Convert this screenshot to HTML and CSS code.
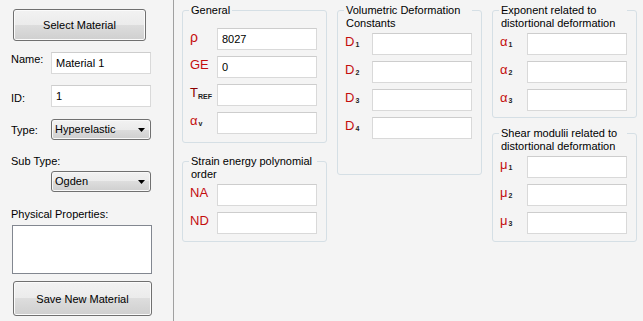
FILE: index.html
```html
<!DOCTYPE html>
<html>
<head>
<meta charset="utf-8">
<link rel="stylesheet" href="styles.css">
</head>
<body>
<div class="app">
  <aside class="side">
    <button class="btn btn-select">Select Material</button>
    <div class="frow row-name"><span class="flabel">Name:</span><input class="tb" type="text" value="Material 1" readonly></div>
    <div class="frow row-id"><span class="flabel">ID:</span><input class="tb" type="text" value="1" readonly></div>
    <div class="frow row-type"><span class="flabel">Type:</span>
      <div class="combo"><span>Hyperelastic</span><svg class="tri" width="7" height="4" viewBox="0 0 7 4"><polygon points="0,0 7,0 3.5,4" fill="#000"/></svg></div>
    </div>
    <div class="sub-label">Sub Type:</div>
    <div class="combo combo-sub"><span>Ogden</span><svg class="tri" width="7" height="4" viewBox="0 0 7 4"><polygon points="0,0 7,0 3.5,4" fill="#000"/></svg></div>
    <div class="phys-label">Physical Properties:</div>
    <textarea class="phys" readonly></textarea>
    <button class="btn btn-save">Save New Material</button>
  </aside>
  <main class="main">
    <div class="col">
      <section class="group g-general">
        <div class="gtitle one">General</div>
        <div class="rows">
          <div class="prow"><span class="sym rho">ρ</span><input class="tb" type="text" value="8027" readonly></div>
          <div class="prow"><span class="sym">GE</span><input class="tb" type="text" value="0" readonly></div>
          <div class="prow"><span class="sym"><span class="dark">T</span><span class="sub ref">REF</span></span><input class="tb" type="text" value="" readonly></div>
          <div class="prow"><span class="sym">α<span class="sub">v</span></span><input class="tb" type="text" value="" readonly></div>
        </div>
      </section>
      <section class="group g-strain">
        <div class="gtitle two">Strain energy polynomial<br>order</div>
        <div class="rows">
          <div class="prow"><span class="sym">NA</span><input class="tb" type="text" value="" readonly></div>
          <div class="prow"><span class="sym">ND</span><input class="tb" type="text" value="" readonly></div>
        </div>
      </section>
    </div>
    <div class="col">
      <section class="group g-vol">
        <div class="gtitle two">Volumetric Deformation<br>Constants</div>
        <div class="rows">
          <div class="prow"><span class="sym">D<span class="sub">1</span></span><input class="tb" type="text" value="" readonly></div>
          <div class="prow"><span class="sym">D<span class="sub">2</span></span><input class="tb" type="text" value="" readonly></div>
          <div class="prow"><span class="sym">D<span class="sub">3</span></span><input class="tb" type="text" value="" readonly></div>
          <div class="prow"><span class="sym">D<span class="sub">4</span></span><input class="tb" type="text" value="" readonly></div>
        </div>
      </section>
    </div>
    <div class="col">
      <section class="group g-exp">
        <div class="gtitle two">Exponent related to<br>distortional deformation</div>
        <div class="rows">
          <div class="prow"><span class="sym">α<span class="sub">1</span></span><input class="tb" type="text" value="" readonly></div>
          <div class="prow"><span class="sym">α<span class="sub">2</span></span><input class="tb" type="text" value="" readonly></div>
          <div class="prow"><span class="sym">α<span class="sub">3</span></span><input class="tb" type="text" value="" readonly></div>
        </div>
      </section>
      <section class="group g-shear">
        <div class="gtitle two">Shear modulii related to<br>distortional deformation</div>
        <div class="rows">
          <div class="prow"><span class="sym">μ<span class="sub">1</span></span><input class="tb" type="text" value="" readonly></div>
          <div class="prow"><span class="sym">μ<span class="sub">2</span></span><input class="tb" type="text" value="" readonly></div>
          <div class="prow"><span class="sym">μ<span class="sub">3</span></span><input class="tb" type="text" value="" readonly></div>
        </div>
      </section>
    </div>
  </main>
</div>
</body>
</html>
```

FILE: styles.css
```css
html, body {
  margin: 0;
  padding: 0;
  background: #f4f4f4;
}
body {
  font-family: "Liberation Sans", Arial, sans-serif;
  font-size: 11px;
  line-height: 13px;
  color: #000;
}
.app {
  display: flex;
  height: 321px;
  overflow: hidden;
}

/* ---------- left side panel ---------- */
.side {
  width: 173px;
  flex: none;
  border-right: 1px solid #a0a0a0;
  display: flex;
  flex-direction: column;
  align-items: flex-start;
}
.btn {
  font-family: inherit;
  font-size: 11px;
  color: #000;
  border: 1px solid #707070;
  border-radius: 3px;
  background: linear-gradient(#f2f2f2, #ebebeb 50%, #dddddd 50%, #cfcfcf);
  box-shadow: inset 0 0 0 1px #fbfbfb;
  padding: 0;
  box-sizing: border-box;
}
.btn-select {
  margin: 9px 0 0 13px;
  width: 133px;
  height: 32px;
}
.btn-save {
  margin: 7px 0 0 13px;
  width: 139px;
  height: 35px;
}
.frow {
  display: flex;
  align-items: flex-start;
  margin-left: 11px;
}
.flabel {
  width: 40px;
  flex: none;
}
.row-name { margin-top: 11px; }
.row-name .flabel { padding-top: 1px; }
.row-id { margin-top: 11px; }
.row-id .flabel { padding-top: 7px; }
.row-type { margin-top: 12px; }
.row-type .flabel { padding-top: 5px; }

.tb {
  width: 100px;
  height: 22px;
  box-sizing: border-box;
  border: 1px solid #d9d9d9;
  border-top-color: #cdcdcd;
  background: #fff;
  padding: 0 4px;
  margin: 0;
  font-family: inherit;
  font-size: 11px;
  color: #000;
  outline: none;
  flex: none;
}
.combo {
  width: 100px;
  height: 21px;
  box-sizing: border-box;
  border: 1px solid #707070;
  border-radius: 3px;
  background: linear-gradient(#f2f2f2, #ebebeb 50%, #dddddd 50%, #cfcfcf);
  box-shadow: inset 0 0 0 1px #f8f8f8;
  display: flex;
  align-items: center;
  justify-content: space-between;
  padding: 0 5px 0 3px;
  flex: none;
}
.tri { display: block; margin-top: 1px; }
.sub-label { margin: 15px 0 0 11px; }
.combo-sub { margin: 3px 0 0 51px; }
.phys-label { margin: 16px 0 0 11px; }
.phys {
  margin: 4px 0 0 12px;
  width: 140px;
  height: 49px;
  box-sizing: border-box;
  border: 1px solid #828790;
  background: #fff;
  resize: none;
  outline: none;
  padding: 0;
}

/* ---------- property groups ---------- */
.main {
  display: flex;
  align-items: flex-start;
  gap: 10px;
  padding: 10px 0 0 8px;
}
.col {
  width: 145px;
  display: flex;
  flex-direction: column;
}
.group {
  border: 1px solid #d5dfe5;
  border-radius: 3px;
  padding: 0 9px 8px 7px;
}
.gtitle {
  margin: -7px 0 0 -1px;
  padding: 0 2px;
  background: #f4f4f4;
  width: fit-content;
  white-space: nowrap;
  line-height: 13px;
}
.gtitle.one { margin-bottom: 11px; }
.gtitle.two {
  width: 128px;
  box-sizing: border-box;
  margin-bottom: 3px;
}
.g-general { padding-bottom: 8px; }
.g-strain { margin-top: 18px; padding-bottom: 7px; }
.g-vol { padding-bottom: 35px; }
.g-exp { padding-bottom: 6px; }
.g-shear { margin-top: 15px; padding-bottom: 7px; }

.rows {
  display: flex;
  flex-direction: column;
  gap: 6px;
}
.prow {
  display: flex;
  align-items: flex-start;
}
.sym {
  width: 27px;
  flex: none;
  color: #c40d0d;
  font-size: 13px;
  line-height: 16px;
  padding-top: 1px;
  white-space: nowrap;
}
.sym.rho { font-size: 14px; }
.dark { color: #8a0000; }
.sub {
  font-size: 7px;
  font-weight: bold;
  color: #1e1e1e;
  vertical-align: -1px;
  margin-left: 1px;
  line-height: 0;
}
.sub.ref { margin-left: 0; vertical-align: -2px; }
```
